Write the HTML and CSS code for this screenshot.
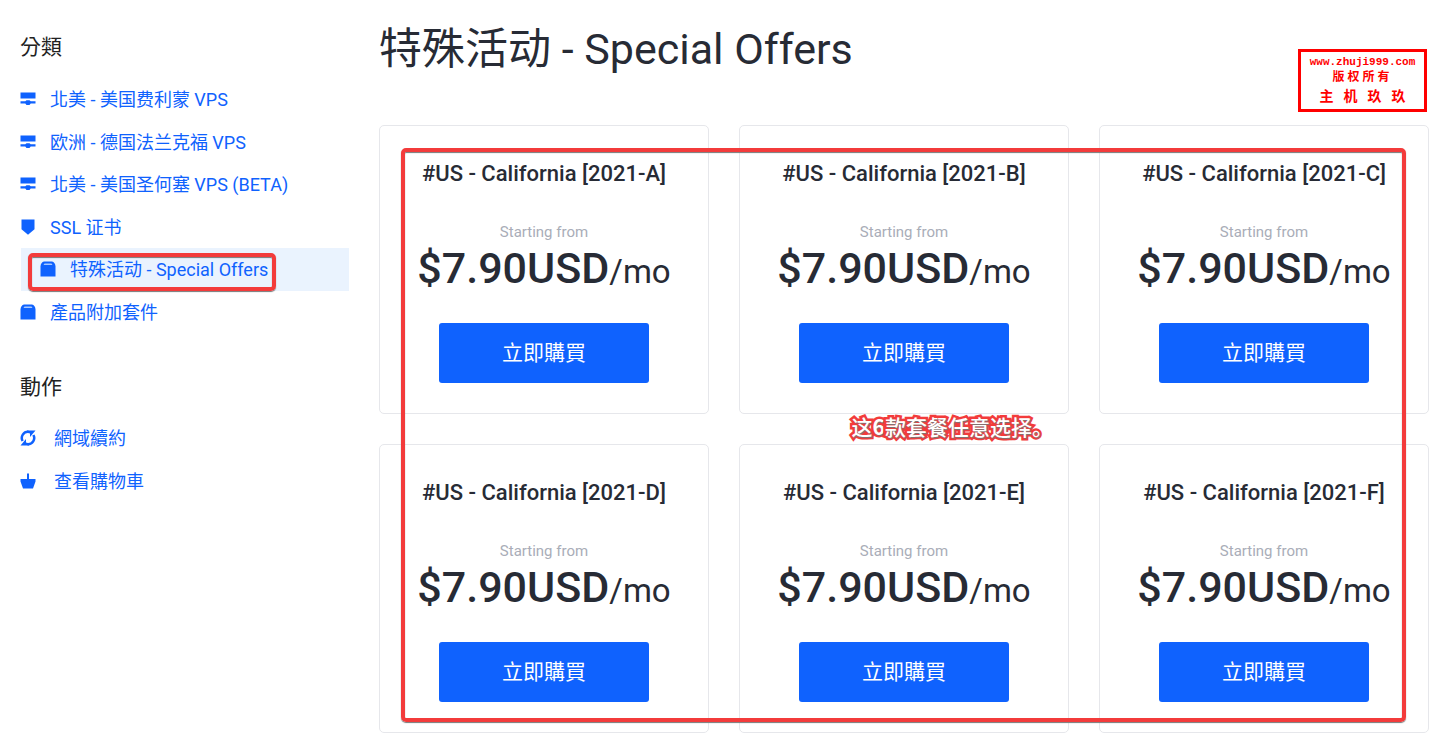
FILE: index.html
```
<!DOCTYPE html>
<html lang="zh-Hant">
<head>
<meta charset="utf-8">
<meta name="viewport" content="width=device-width, initial-scale=1">
<title>特殊活动 - Special Offers</title>
<link rel="stylesheet" href="styles.css">
</head>
<body>
<svg class="sprite" aria-hidden="true">
  <symbol id="server" viewBox="0 0 16 16"><path d="M.5 1.500h15v6H.5zM.5 10.300h4.800l1.200-1h3l1.200 1h4.800v2.200h-4.800l-1.200 1.500h-3l-1.200-1.500H.5z"/></symbol>
  <symbol id="shield" viewBox="0 0 16 16"><path d="M1.500 .5h13v9.800L8 15.800 1.500 10.300z"/></symbol>
  <symbol id="box" viewBox="0 0 16 16"><path d="M4 .5h8c2 .3 3.500 2.500 3.500 5v10H.5v-10C.5 3 2 .8 4 .5z"/><path class="lid" d="M4.500 2.500h7l1 1.500h-9z"/></symbol>
  <symbol id="renew" viewBox="0 0 16 16"><path d="M2.600 11A6.200 6.200 0 0 1 8.500 1.800" class="arc"/><path d="M13.400 5A6.200 6.200 0 0 1 7.500 14.200" class="arc"/><path d="M7 .5h8.500L10 7V3.500L7 2.800zM9 15.500H.5L6 9v3.500l3 .7z"/></symbol>
  <symbol id="basket" viewBox="0 0 16 16"><path d="M7 .5h2V6h6.500v2.500L13 15.500H3L.5 8.500V6H7z"/></symbol>
</svg>
<div class="page">
  <aside class="sidebar">
    <h2 class="side-title">分類</h2>
    <nav class="menu menu-categories" aria-label="分類">
      <a class="item" href="#fremont"><svg class="icon"><use href="#server"/></svg><span>北美 - 美国费利蒙 VPS</span></a>
      <a class="item" href="#frankfurt"><svg class="icon"><use href="#server"/></svg><span>欧洲 - 德国法兰克福 VPS</span></a>
      <a class="item" href="#sanjose"><svg class="icon"><use href="#server"/></svg><span>北美 - 美国圣何塞 VPS (BETA)</span></a>
      <a class="item" href="#ssl"><svg class="icon"><use href="#shield"/></svg><span>SSL 证书</span></a>
      <a class="item active" href="#offers" aria-current="page"><svg class="icon"><use href="#box"/></svg><span>特殊活动 - Special Offers</span></a>
      <a class="item" href="#addons"><svg class="icon"><use href="#box"/></svg><span>產品附加套件</span></a>
    </nav>
    <h2 class="side-title">動作</h2>
    <nav class="menu menu-actions" aria-label="動作">
      <a class="item" href="#renewals"><svg class="icon"><use href="#renew"/></svg><span>網域續約</span></a>
      <a class="item" href="#cart"><svg class="icon"><use href="#basket"/></svg><span>查看購物車</span></a>
    </nav>
  </aside>
  <main class="main">
    <h1 class="title">特殊活动 - Special Offers</h1>
    <div class="stamp"><span class="stamp-url">www.zhuji999.com</span><span class="stamp-rights">版权所有</span><span class="stamp-name">主机玖玖</span></div>
    <div class="products">
      <article class="card"><h3 class="name">#US - California [2021-A]</h3><p class="from">Starting from</p><p class="price"><strong>$7.90USD</strong><span>/mo</span></p><button class="buy" type="button">立即購買</button></article>
      <article class="card"><h3 class="name">#US - California [2021-B]</h3><p class="from">Starting from</p><p class="price"><strong>$7.90USD</strong><span>/mo</span></p><button class="buy" type="button">立即購買</button></article>
      <article class="card"><h3 class="name">#US - California [2021-C]</h3><p class="from">Starting from</p><p class="price"><strong>$7.90USD</strong><span>/mo</span></p><button class="buy" type="button">立即購買</button></article>
      <article class="card"><h3 class="name">#US - California [2021-D]</h3><p class="from">Starting from</p><p class="price"><strong>$7.90USD</strong><span>/mo</span></p><button class="buy" type="button">立即購買</button></article>
      <article class="card"><h3 class="name">#US - California [2021-E]</h3><p class="from">Starting from</p><p class="price"><strong>$7.90USD</strong><span>/mo</span></p><button class="buy" type="button">立即購買</button></article>
      <article class="card"><h3 class="name">#US - California [2021-F]</h3><p class="from">Starting from</p><p class="price"><strong>$7.90USD</strong><span>/mo</span></p><button class="buy" type="button">立即購買</button></article>
      <div class="frame"></div>
      <p class="note" lang="zh-Hans">这<b>6</b>款套餐任意选择。</p>
    </div>
  </main>
</div>
</body>
</html>
```
FILE: styles.css
```
*, *::after { box-sizing: border-box; }
body {
  margin: 0;
  background: #fff;
  color: #272b35;
  font-family: Roboto, "Noto Sans CJK TC", sans-serif;
}
h1, h2, h3, p { margin: 0; font-weight: 400; }
.sprite { position: absolute; width: 0; height: 0; }
.page {
  display: grid;
  grid-template-columns: 329px minmax(0, 1fr);
  gap: 30px;
  padding: 0 13px 0 20px;
}
.sidebar { padding-top: 32px; color: #222; }
.side-title { font-size: 21px; line-height: 30px; }
.menu { display: grid; grid-auto-rows: 1fr; }
.menu-categories { min-height: 255px; margin: 16px 0 39px; }
.menu-actions { min-height: 85px; margin-top: 15px; }
.item {
  display: flex;
  align-items: center;
  gap: 14px;
  color: #0f62fe;
  font-family: Roboto, "Noto Sans CJK SC", sans-serif;
  font-size: 18px;
  text-decoration: none;
}
.item span { padding-bottom: 2px; }
.menu-actions .item { gap: 18px; }
.item.active { position: relative; margin-left: 1px; padding-left: 19px; background: #eaf3fe; }
.item.active::after {
  content: "";
  position: absolute;
  inset: 5px auto 0 7px;
  width: 248px;
  border: 4px solid #f33b3b;
  border-radius: 5px;
  box-shadow: 0 1px 1px #777, inset 0 1px 1px #777;
}
.icon { flex: none; width: 16px; height: 16px; fill: currentColor; }
.lid { fill: #a9c9ff; }
.arc { fill: none; stroke: currentColor; stroke-width: 2.500; }
.main { position: relative; padding-top: 19px; }
.title {
  margin-bottom: 46px;
  font-family: Roboto, "Noto Sans CJK SC", sans-serif;
  font-size: 43px;
  line-height: 60px;
}
.stamp {
  position: absolute;
  top: 49px;
  right: 2px;
  display: flex;
  flex-direction: column;
  align-items: center;
  width: 129px;
  height: 63px;
  padding-top: 1px;
  border: 3px solid #f00;
  color: #f00;
  font-family: "Liberation Mono", "Noto Sans CJK SC", monospace;
  font-weight: 700;
}
.stamp-url { font-size: 11px; line-height: 18px; }
.stamp-rights { font-size: 12px; line-height: 14px; letter-spacing: 3px; }
.stamp-name { font-size: 14px; line-height: 24px; letter-spacing: 10px; padding-left: 10px; }
.products {
  position: relative;
  display: grid;
  grid-template-columns: repeat(3, minmax(0, 1fr));
  gap: 30px;
}
.card {
  display: flex;
  flex-direction: column;
  align-items: center;
  padding: 31px 20px 30px;
  border: 1px solid #e6e7eb;
  border-radius: 5px;
  white-space: nowrap;
}
.name { font-size: 22px; line-height: 34px; font-weight: 500; }
.from { margin-top: 30px; color: #a9adb8; font-size: 15px; line-height: 22px; }
.price { font-size: 43px; line-height: 50px; }
.price strong { font-weight: 500; }
.price span { font-size: 33px; line-height: 1; }
.buy {
  width: 210px;
  margin-top: 30px;
  padding: 0;
  border: 0;
  border-radius: 3px;
  background: #0f62fe;
  color: #fff;
  font: 400 21px/60px Roboto, "Noto Sans CJK TC", sans-serif;
}
.frame {
  position: absolute;
  inset: 23px 23px 11px 22px;
  border: 4px solid #f33b3b;
  border-radius: 5px;
  box-shadow: 0 1px 1px #777, inset 0 1px 1px #777;
  pointer-events: none;
}
.note {
  position: absolute;
  top: 286px;
  left: 45%;
  color: #fff;
  font: 500 21px/30px "Noto Sans CJK SC", sans-serif;
  white-space: nowrap;
  -webkit-text-stroke: 5px #f33b3b;
  paint-order: stroke fill;
  text-shadow: 1px 1px 1px #777;
}
.note b { font-weight: 700; }
```
